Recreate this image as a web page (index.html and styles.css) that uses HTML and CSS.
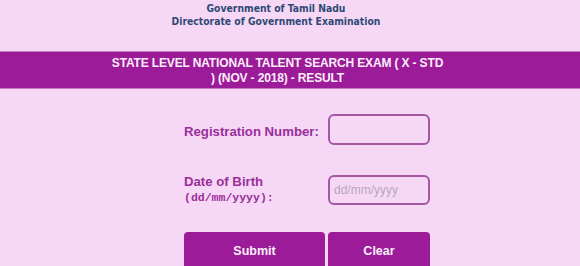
FILE: index.html
```html
<!DOCTYPE html>
<html>
<head>
<meta charset="utf-8">
<link rel="stylesheet" href="styles.css">
</head>
<body>
<div class="header">
  <div>Government of Tamil Nadu</div>
  <div>Directorate of Government Examination</div>
</div>
<div class="bar">
  <div class="title">STATE LEVEL NATIONAL TALENT SEARCH EXAM ( X - STD ) (NOV - 2018) - RESULT</div>
</div>
<form class="form">
  <label class="label label-reg" for="reg">Registration Number:</label>
  <input class="field" id="reg" type="text">
  <label class="label label-dob" for="dob">Date of Birth<br><span class="mono">(dd/mm/yyyy):</span></label>
  <input class="field" id="dob" type="text" placeholder="dd/mm/yyyy">
  <button type="button" class="btn btn-submit">Submit</button>
  <button type="button" class="btn btn-clear">Clear</button>
</form>
</body>
</html>
```
FILE: styles.css
```css
html, body {
  margin: 0;
  padding: 0;
  background: #f6d8f6;
  overflow: hidden;
}
body {
  font-family: "Liberation Sans", Arial, sans-serif;
}
.header {
  padding-top: 2px;
  padding-right: 28px;
  text-align: center;
  font-family: "DejaVu Sans Condensed", "DejaVu Sans", sans-serif;
  font-stretch: condensed;
  font-size: 10.3px;
  font-weight: bold;
  line-height: 13px;
  color: #2f4a74;
  height: 49px;
}
.bar {
  background: #9c1b98;
  border-top: 1px solid #c27ac0;
  border-bottom: 1px solid #c27ac0;
  height: 36px;
  display: flex;
  justify-content: center;
  align-items: center;
  padding-right: 25px;
}
.title {
  width: 333px;
  text-align: center;
  color: #fbeefb;
  font-weight: bold;
  font-size: 12px;
  line-height: 15px;
  letter-spacing: -0.15px;
  padding-top: 2px;
}
.form {
  display: grid;
  grid-template-columns: 144px 102px;
  column-gap: 0;
  margin: 25px 0 0 184px;
  width: 248px;
  align-items: center;
}
.label {
  color: #9a2e9a;
  font-weight: bold;
  font-size: 13.2px;
  line-height: 15px;
}
.label-reg {
  padding-top: 3px;
}
.label-dob {
  margin-top: 29px;
  align-self: start;
}
.mono {
  font-family: "Liberation Mono", monospace;
  font-size: 11.5px;
  line-height: 16px;
}
.field {
  box-sizing: border-box;
  width: 102px;
  height: 31px;
  border: 2px solid #a556a5;
  border-radius: 6px;
  background: #f6d8f6;
  padding: 0 4px;
  font-family: "Liberation Sans", Arial, sans-serif;
  font-size: 12px;
  outline: none;
}
#dob {
  margin-top: 29px;
  height: 30px;
}
.field::placeholder {
  color: #b8a6ba;
}
.btn {
  margin-top: 26px;
  height: 40px;
  border: none;
  border-radius: 4px;
  background: #9c1b98;
  color: #fbeefb;
  font-family: "Liberation Sans", Arial, sans-serif;
  font-weight: bold;
  font-size: 12.5px;
  padding: 0 0 3px 0;
}
.btn-submit {
  width: 141px;
}
.btn-clear {
  width: 102px;
}
```
